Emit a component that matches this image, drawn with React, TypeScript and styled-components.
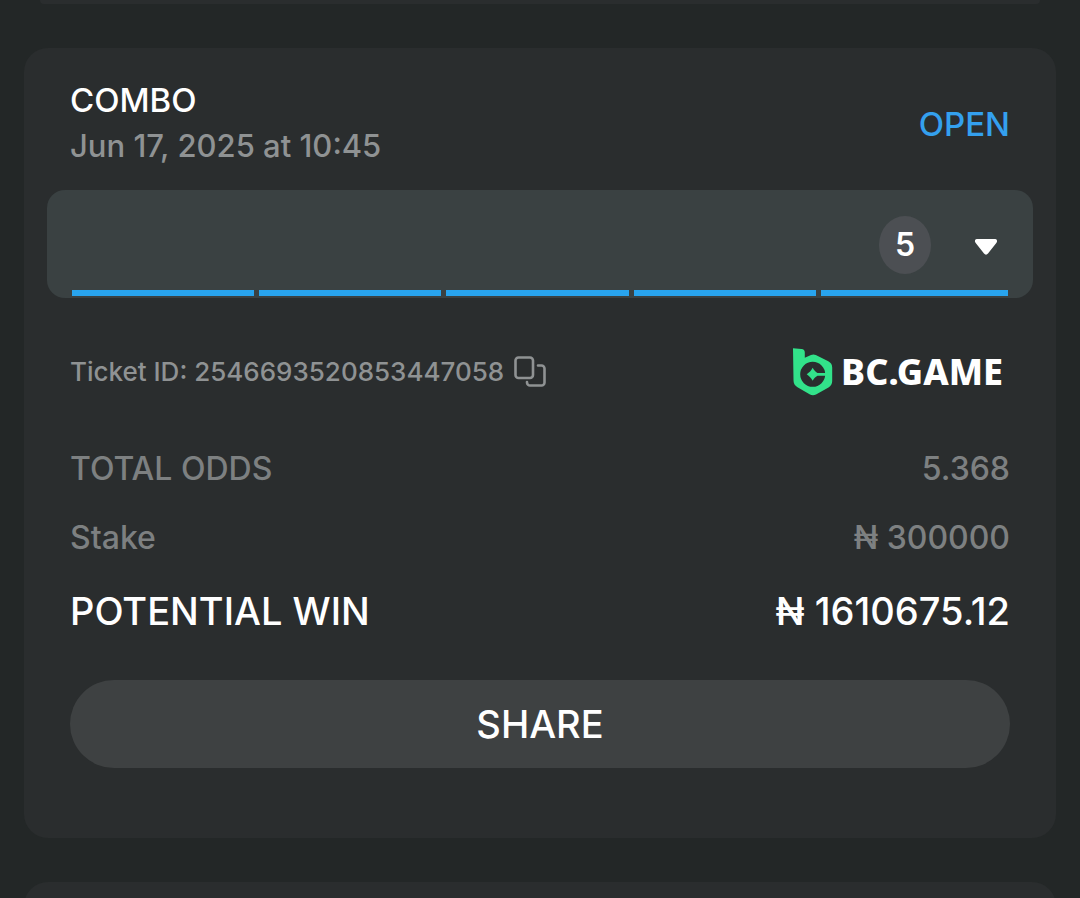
import React from "react";
import styled, { createGlobalStyle } from "styled-components";

const GlobalStyle = createGlobalStyle`
  *, *::before, *::after { box-sizing: border-box; }
  html { background: #232727; }
  body {
    margin: 0;
    min-height: 100vh;
    overflow-x: hidden;
    background: #232727;
    color: #ffffff;
    font-family: Inter, "Liberation Sans", sans-serif;
    font-weight: 500;
  }
  button { font: inherit; color: inherit; border: 0; cursor: pointer; }
  h2, p, dl, dt, dd, ul { margin: 0; padding: 0; font: inherit; }
`;

const Page = styled.main`
  height: 100vh;
  overflow: hidden;
  padding: 0 24px;
  display: flex;
  flex-direction: column;
  gap: 44px;
`;

const Neighbour = styled.div<{ $edge: "top" | "bottom" }>`
  flex: none;
  height: ${(p) => (p.$edge === "top" ? "4px" : "120px")};
  margin: ${(p) => (p.$edge === "top" ? "0 16px" : "0")};
  border-radius: ${(p) => (p.$edge === "top" ? "0 0 8px 8px" : "24px")};
  background: #2a2d2e;
`;

const Ticket = styled.article`
  flex: none;
  padding: 34px 23px 70px;
  border-radius: 24px;
  background: #2a2d2e;
`;

const Header = styled.header`
  display: flex;
  justify-content: space-between;
  align-items: center;
  padding: 0 23px;
  font-size: 33px;
`;

const Title = styled.h2`
  line-height: 36px;
`;

const PlacedAt = styled.p`
  margin-top: 8px;
  font-size: 31px;
  line-height: 40px;
  color: #8f9293;
`;

const Status = styled.span`
  line-height: 40px;
  color: #34a0ee;
`;

const LegsToggle = styled.button`
  display: flex;
  flex-direction: column;
  justify-content: space-between;
  width: 100%;
  height: 108px;
  margin-top: 24px;
  padding: 26px 25px 2px;
  border-radius: 18px;
  background: #3a4142;
`;

const ToggleInfo = styled.span`
  display: flex;
  justify-content: flex-end;
  align-items: center;
  gap: 43px;
  width: 100%;
  padding-right: 10px;
`;

const Count = styled.span`
  display: grid;
  place-items: center;
  width: 52px;
  height: 58px;
  border-radius: 50%;
  background: #4c4f53;
  font-size: 32px;
  line-height: 40px;
  font-weight: 600;
`;

const LegBars = styled.span`
  display: grid;
  grid-template-columns: repeat(5, 1fr);
  width: 100%;
`;

const LegBar = styled.span`
  height: 6px;
  margin-right: 5px;
  background: #28a4ee;
  &:last-child { margin-right: 0; }
`;

const TicketRow = styled.div`
  display: flex;
  justify-content: space-between;
  align-items: center;
  margin-top: 50px;
  padding: 0 30px 0 23px;
`;

const TicketId = styled.p`
  display: flex;
  align-items: center;
  gap: 10px;
  font-size: 26px;
  line-height: 32px;
  color: #8f9293;
`;

const CopyButton = styled.button`
  display: block;
  padding: 0;
  background: none;
  color: #8f9293;
  svg { display: block; }
`;

const Brand = styled.div`
  display: flex;
  align-items: center;
  gap: 8px;
  svg { display: block; }
`;

const BrandName = styled.span`
  font-family: "Noto Sans", "Open Sans", sans-serif;
  font-size: 36px;
  line-height: 48px;
  font-weight: 800;
`;

const Totals = styled.dl`
  margin-top: 53px;
  padding: 0 23px;
`;

const TotalRow = styled.div<{ $strong?: boolean }>`
  display: flex;
  justify-content: space-between;
  align-items: center;
  margin-bottom: ${(p) => (p.$strong ? "0" : "29px")};
  font-size: ${(p) => (p.$strong ? "38px" : "32px")};
  line-height: ${(p) => (p.$strong ? "48px" : "40px")};
  color: ${(p) => (p.$strong ? "#ffffff" : "#7d8081")};
`;

const ShareButton = styled.button`
  display: block;
  width: calc(100% - 46px);
  height: 88px;
  margin: 45px 23px 0;
  border-radius: 44px;
  background: #3e4142;
  font-size: 38px;
  line-height: 48px;
`;

const CopyIcon = () => (
  <svg width="32" height="32" viewBox="0 0 32 32" fill="none" stroke="currentColor" strokeWidth="2.600" strokeLinecap="round" aria-hidden="true">
    <rect x="1.500" y="1.500" width="17.500" height="20.500" rx="3" />
    <path d="M24 9.500h3.500a3 3 0 0 1 3 3v14a3 3 0 0 1-3 3h-11.500a3 3 0 0 1-3-3v-.500" />
  </svg>
);

const Caret = () => (
  <svg width="24" height="22" viewBox="0 0 24 22" fill="#fff" aria-hidden="true">
    <path d="M3 5h18c2 0 2.700 2.200 1.500 3.700L14 19.500c-1.200 1.500-2.800 1.500-4 0L1.500 8.700C.3 7.200 1 5 3 5z" />
  </svg>
);

const BrandMark = () => (
  <svg width="40" height="48" viewBox="0 0 40 48" aria-hidden="true">
    <path
      fill="#32e28a"
      fillRule="evenodd"
      d="M0 .3 8.500 1c2.200.2 3.300 1.400 3.300 3.500v5.300L18 7c1.600-.7 3.200-.7 4.800 0l12.500 6.200c2.600 1.400 3.900 3.500 3.900 6.300V33c0 2.800-1.300 5-3.700 6.500L23 46.500c-1.900 1-4.200 1-6 0L4.500 39.300C1.500 37.500.5 35.300.5 32.300zM19.700 13.800a12.500 12.500 0 1 0 0 25 12.500 12.500 0 0 0 0-25z"
    />
    <path
      fill="#32e28a"
      d="M19.700 19.800c1.400 2.600 2.600 3.900 4.800 5.100H35v2.800H24.500c-2.200 1.200-3.400 2.500-4.800 5.100-1.600-2.900-3.300-4.600-6-6.500 2.700-1.900 4.400-3.600 6-6.500z"
    />
  </svg>
);

const LEGS = ["leg-1", "leg-2", "leg-3", "leg-4", "leg-5"];

export default function App() {
  return (
    <>
      <GlobalStyle />
      <Page>
        <Neighbour $edge="top" />
        <Ticket>
          <Header>
            <div>
              <Title>COMBO</Title>
              <PlacedAt>Jun 17, 2025 at 10:45</PlacedAt>
            </div>
            <Status>OPEN</Status>
          </Header>

          <LegsToggle type="button" aria-expanded="false">
            <ToggleInfo>
              <Count>{LEGS.length}</Count>
              <Caret />
            </ToggleInfo>
            <LegBars>
              {LEGS.map((leg) => (
                <LegBar key={leg} />
              ))}
            </LegBars>
          </LegsToggle>

          <TicketRow>
            <TicketId>
              Ticket ID: 2546693520853447058
              <CopyButton type="button" aria-label="Copy ticket ID">
                <CopyIcon />
              </CopyButton>
            </TicketId>
            <Brand>
              <BrandMark />
              <BrandName>BC.GAME</BrandName>
            </Brand>
          </TicketRow>

          <Totals>
            <TotalRow>
              <dt>TOTAL ODDS</dt>
              <dd>5.368</dd>
            </TotalRow>
            <TotalRow>
              <dt>Stake</dt>
              <dd>₦ 300000</dd>
            </TotalRow>
            <TotalRow $strong>
              <dt>POTENTIAL WIN</dt>
              <dd>₦ 1610675.12</dd>
            </TotalRow>
          </Totals>

          <ShareButton type="button">SHARE</ShareButton>
        </Ticket>
        <Neighbour $edge="bottom" />
      </Page>
    </>
  );
}
